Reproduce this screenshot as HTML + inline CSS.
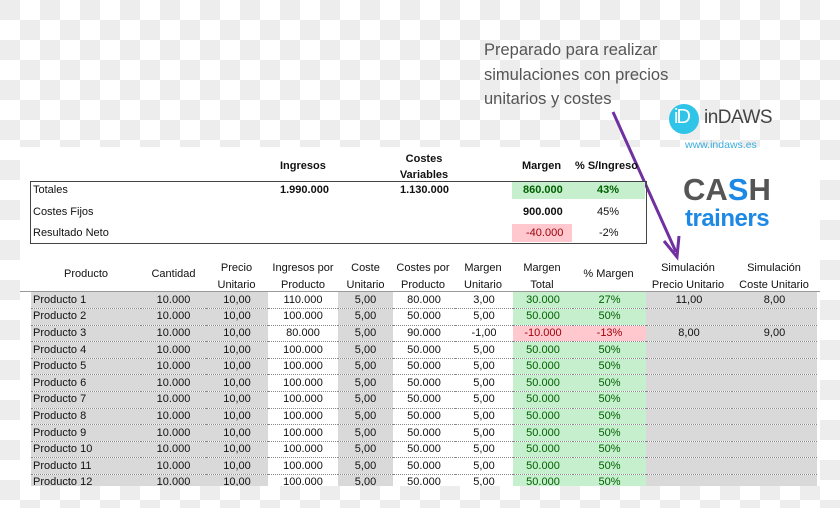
<!DOCTYPE html>
<html><head><meta charset="utf-8"><style>
*{margin:0;padding:0;box-sizing:border-box}
body{width:840px;height:508px;overflow:hidden;position:relative;font-family:"Liberation Sans",sans-serif;font-size:11px;color:#111;
background-color:#fff;background-image:
linear-gradient(45deg,#ededed 25%,transparent 25%,transparent 75%,#ededed 75%),
linear-gradient(45deg,#ededed 25%,transparent 25%,transparent 75%,#ededed 75%);
background-size:40px 40px;background-position:20px 0,0 20px}
.a{position:absolute;white-space:nowrap}
.w{position:absolute;background:#fff}
.c{text-align:center}
.b{font-weight:bold}
table{position:absolute;left:31px;top:292px;border-collapse:collapse;table-layout:fixed}
td{height:16.6px;padding:0;font-size:11px;text-align:center;border:0;border-bottom:1px dotted #888;line-height:15px;overflow:hidden}
td.g{background:#d9d9d9}
td.gr{background:#c6efce;color:#006100}
td.rd{background:#ffc7ce;color:#9c0006}
td.l{text-align:left;padding-left:2px}
</style></head><body>
<div class="w" style="left:20px;top:147px;width:800px;height:339px"></div>
<div class="a" style="left:484px;top:38px;font-size:16.5px;line-height:24.5px;color:#555">Preparado para realizar<br>simulaciones con precios<br>unitarios y costes</div>
<div class="a" style="left:669px;top:104px;width:30px;height:30px;border-radius:50%;background:#2fc4e8"></div>
<div class="a" style="left:674px;top:106px;font-size:20px;color:#fff;letter-spacing:-2px">iD</div>
<div class="a" style="left:704px;top:107px;font-size:19px;color:#444;letter-spacing:-0.5px">inDAWS</div>
<div class="a" style="left:685px;top:139px;font-size:10.5px;color:#3aaee0">www.indaws.es</div>
<div class="a b" style="left:683px;top:172px;font-size:31px;color:#555">CA<span style="color:#1e88e5">S</span>H</div>
<div class="a b" style="left:685px;top:205px;font-size:24px;color:#1e88e5;letter-spacing:-0.5px">trainers</div>
<svg class="a" style="left:0;top:0" width="840" height="508"><line x1="613" y1="112" x2="676" y2="252" stroke="#7030a0" stroke-width="3"/><polyline points="664,241 677,257 679,236" fill="none" stroke="#7030a0" stroke-width="3"/></svg>
<div class="a b" style="left:280px;top:160px">Ingresos</div>
<div class="a b c" style="left:385px;top:151px;width:78px;line-height:16px">Costes<br>Variables</div>
<div class="a b" style="left:522px;top:160px">Margen</div>
<div class="a b" style="left:575px;top:160px">% S/Ingreso</div>
<div class="a" style="left:30px;top:181px;width:617px;height:63px;border:1.5px solid #444"></div>
<div class="a" style="left:512px;top:182px;width:133px;height:17px;background:#c6efce"></div>
<div class="a" style="left:512px;top:224px;width:60px;height:18px;background:#ffc7ce"></div>
<div class="a" style="left:33px;top:184px">Totales</div>
<div class="a b" style="left:280px;top:184px">1.990.000</div>
<div class="a b" style="left:400px;top:184px">1.130.000</div>
<div class="a b" style="left:523px;top:184px;color:#006100">860.000</div>
<div class="a b" style="left:597px;top:184px;color:#006100">43%</div>
<div class="a" style="left:33px;top:206px">Costes Fijos</div>
<div class="a b" style="left:523px;top:206px">900.000</div>
<div class="a" style="left:597px;top:206px">45%</div>
<div class="a" style="left:33px;top:227px">Resultado Neto</div>
<div class="a" style="left:526px;top:227px;color:#9c0006">-40.000</div>
<div class="a" style="left:599px;top:227px">-2%</div>
<div class="a" style="left:20px;top:291px;width:800px;height:1px;background:#999"></div>
<div class="a c" style="left:31px;top:268px;width:110px">Producto</div>
<div class="a c" style="left:141px;top:268px;width:65px">Cantidad</div>
<div class="a c" style="left:205px;top:260px;width:63px;line-height:16.5px">Precio<br>Unitario</div>
<div class="a c" style="left:268px;top:260px;width:70px;line-height:16.5px">Ingresos por<br>Producto</div>
<div class="a c" style="left:338px;top:260px;width:55px;line-height:16.5px">Coste<br>Unitario</div>
<div class="a c" style="left:392px;top:260px;width:62px;line-height:16.5px">Costes por<br>Producto</div>
<div class="a c" style="left:454px;top:260px;width:58px;line-height:16.5px">Margen<br>Unitario</div>
<div class="a c" style="left:512px;top:260px;width:60px;line-height:16.5px">Margen<br>Total</div>
<div class="a c" style="left:572px;top:268px;width:73px">% Margen</div>
<div class="a c" style="left:645px;top:260px;width:86px;line-height:16.5px">Simulación<br>Precio Unitario</div>
<div class="a c" style="left:731px;top:260px;width:86px;line-height:16.5px">Simulación<br>Coste Unitario</div>
<table>
<colgroup><col style="width:110px"><col style="width:65px"><col style="width:62px"><col style="width:70px"><col style="width:55px"><col style="width:62px"><col style="width:58px"><col style="width:60px"><col style="width:73px"><col style="width:86px"><col style="width:85px"></colgroup>
<tr><td class="g l">Producto 1</td><td class="g">10.000</td><td class="g">10,00</td><td>110.000</td><td class="g">5,00</td><td>80.000</td><td>3,00</td><td class="gr">30.000</td><td class="gr">27%</td><td class="g">11,00</td><td class="g">8,00</td></tr>
<tr><td class="g l">Producto 2</td><td class="g">10.000</td><td class="g">10,00</td><td>100.000</td><td class="g">5,00</td><td>50.000</td><td>5,00</td><td class="gr">50.000</td><td class="gr">50%</td><td class="g"></td><td class="g"></td></tr>
<tr><td class="g l">Producto 3</td><td class="g">10.000</td><td class="g">10,00</td><td>80.000</td><td class="g">5,00</td><td>90.000</td><td>-1,00</td><td class="rd">-10.000</td><td class="rd">-13%</td><td class="g">8,00</td><td class="g">9,00</td></tr>
<tr><td class="g l">Producto 4</td><td class="g">10.000</td><td class="g">10,00</td><td>100.000</td><td class="g">5,00</td><td>50.000</td><td>5,00</td><td class="gr">50.000</td><td class="gr">50%</td><td class="g"></td><td class="g"></td></tr>
<tr><td class="g l">Producto 5</td><td class="g">10.000</td><td class="g">10,00</td><td>100.000</td><td class="g">5,00</td><td>50.000</td><td>5,00</td><td class="gr">50.000</td><td class="gr">50%</td><td class="g"></td><td class="g"></td></tr>
<tr><td class="g l">Producto 6</td><td class="g">10.000</td><td class="g">10,00</td><td>100.000</td><td class="g">5,00</td><td>50.000</td><td>5,00</td><td class="gr">50.000</td><td class="gr">50%</td><td class="g"></td><td class="g"></td></tr>
<tr><td class="g l">Producto 7</td><td class="g">10.000</td><td class="g">10,00</td><td>100.000</td><td class="g">5,00</td><td>50.000</td><td>5,00</td><td class="gr">50.000</td><td class="gr">50%</td><td class="g"></td><td class="g"></td></tr>
<tr><td class="g l">Producto 8</td><td class="g">10.000</td><td class="g">10,00</td><td>100.000</td><td class="g">5,00</td><td>50.000</td><td>5,00</td><td class="gr">50.000</td><td class="gr">50%</td><td class="g"></td><td class="g"></td></tr>
<tr><td class="g l">Producto 9</td><td class="g">10.000</td><td class="g">10,00</td><td>100.000</td><td class="g">5,00</td><td>50.000</td><td>5,00</td><td class="gr">50.000</td><td class="gr">50%</td><td class="g"></td><td class="g"></td></tr>
<tr><td class="g l">Producto 10</td><td class="g">10.000</td><td class="g">10,00</td><td>100.000</td><td class="g">5,00</td><td>50.000</td><td>5,00</td><td class="gr">50.000</td><td class="gr">50%</td><td class="g"></td><td class="g"></td></tr>
<tr><td class="g l">Producto 11</td><td class="g">10.000</td><td class="g">10,00</td><td>100.000</td><td class="g">5,00</td><td>50.000</td><td>5,00</td><td class="gr">50.000</td><td class="gr">50%</td><td class="g"></td><td class="g"></td></tr>
<tr><td class="g l">Producto 12</td><td class="g">10.000</td><td class="g">10,00</td><td>100.000</td><td class="g">5,00</td><td>50.000</td><td>5,00</td><td class="gr">50.000</td><td class="gr">50%</td><td class="g"></td><td class="g"></td></tr>
</table>
<div class="a" style="left:0;top:486px;width:840px;height:22px;background-color:#fff;background-image:linear-gradient(45deg,#ededed 25%,transparent 25%,transparent 75%,#ededed 75%),linear-gradient(45deg,#ededed 25%,transparent 25%,transparent 75%,#ededed 75%);background-size:40px 40px;background-position:20px -486px,0 -466px"></div>
</body></html>
